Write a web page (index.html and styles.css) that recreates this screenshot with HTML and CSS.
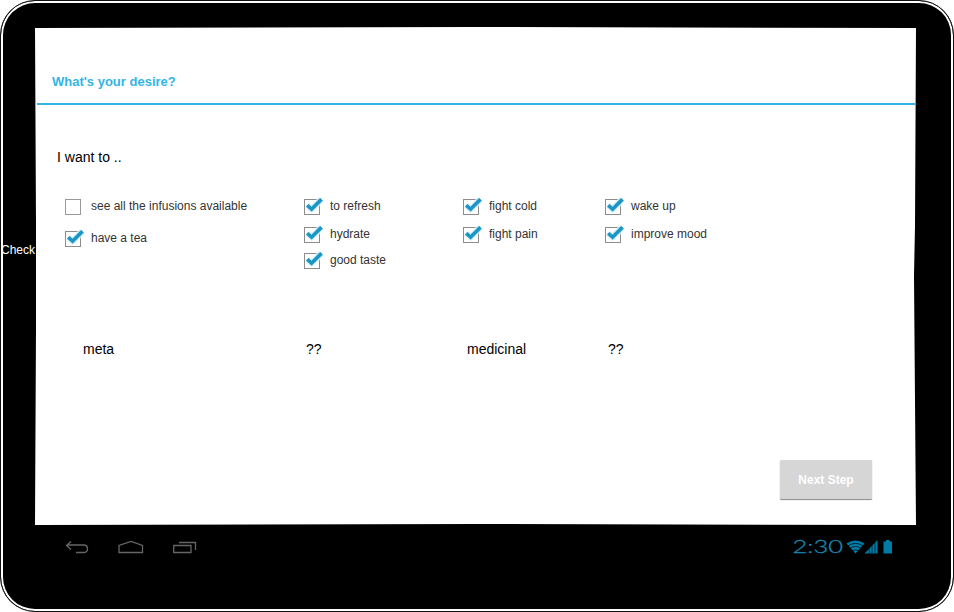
FILE: index.html
```html
<!DOCTYPE html>
<html lang="en">
<head>
<meta charset="utf-8">
<title>What's your desire?</title>
<link rel="stylesheet" href="styles.css">
</head>
<body>
<svg class="defs" width="0" height="0" aria-hidden="true">
  <symbol id="off" viewBox="0 0 22 22"><rect x="1.5" y="4.500" width="15" height="15" fill="#fff" stroke="#999"/></symbol>
  <symbol id="on" viewBox="0 0 22 22">
    <rect x="1.5" y="4.500" width="15" height="15" fill="#fff" stroke="#8c8c8c"/>
    <path d="M4.200 10.300 8.600 14.200 18.500 4.200" fill="none" stroke="#e3f5fb" stroke-opacity=".75" stroke-width="7" stroke-linejoin="round"/>
    <path d="M4.200 10.300 8.600 14.200 18.500 4.200" fill="none" stroke="#7fcdea" stroke-opacity=".5" stroke-width="4.800"/>
    <path d="M4.200 10.300 8.600 14.200 18.500 4.200" fill="none" stroke="#1b96c4" stroke-width="3.500"/>
  </symbol>
</svg>
<div class="device">
  <div class="body">
    <div class="side">Check</div>
    <main class="screen">
      <h1>What's your desire?</h1>
      <p class="intro">I want to ..</p>
      <div class="options">
        <div class="col">
          <label class="gap"><svg><use href="#off"/></svg>see all the infusions available</label>
          <label><svg><use href="#on"/></svg>have a tea</label>
        </div>
        <div class="col">
          <label><svg><use href="#on"/></svg>to refresh</label>
          <label class="tight"><svg><use href="#on"/></svg>hydrate</label>
          <label><svg><use href="#on"/></svg>good taste</label>
        </div>
        <div class="col">
          <label><svg><use href="#on"/></svg>fight cold</label>
          <label><svg><use href="#on"/></svg>fight pain</label>
        </div>
        <div class="col">
          <label><svg><use href="#on"/></svg>wake up</label>
          <label><svg><use href="#on"/></svg>improve mood</label>
        </div>
      </div>
      <div class="groups"><span>meta</span><span>??</span><span>medicinal</span><span>??</span></div>
      <button type="button">Next Step</button>
    </main>
  </div>
  <footer class="navbar">
    <svg class="nav" width="136" height="20" viewBox="0 0 136 20" fill="none" stroke="#666" stroke-width="1.300">
      <path d="M7 2.500 2.500 6.500 7 10.500M2.500 6H19.500Q23.500 6 23.500 9.700T19.500 13.500H12"/>
      <path d="M55 13.500V6.500L67 2.500 78.500 6.500V13.500Z"/>
      <path d="M109.700 6.500H127V13.500H109.700ZM115 3.500H131.500V11"/>
    </svg>
    <svg class="status" width="102" height="20" viewBox="0 0 102 20">
      <text x="0.500" y="14" textLength="50.500" lengthAdjust="spacingAndGlyphs">2:30</text>
      <g fill="#007ba7">
        <path d="M54.500 4.500Q63.500-1.300 72.500 4.500L63.500 14.500Z"/>
        <path d="M56 6.800Q63.500 2 71 6.800M58 9.300Q63.500 5.600 69 9.300M60.500 11.700Q63.500 9.800 66.500 11.700" fill="none" stroke="#000" stroke-width=".7"/>
        <path d="M72.500 14.500 85.500 1V14.500Z"/>
        <path d="M77.200 5V15M80 2V15M83 0V15" stroke="#000" stroke-width=".6"/>
        <path d="M91.500 2.500H94V1H97.500V2.500H100V14.500H91.500Z"/>
      </g>
    </svg>
  </footer>
</div>
</body>
</html>
```
FILE: styles.css
```css
* { box-sizing: border-box; }
body {
  margin: 0;
  width: 954px;
  height: 612px;
  overflow: hidden;
  background: #fff;
  font-family: "Liberation Sans", Arial, sans-serif;
}
.defs { display: block; height: 0; }
.device {
  width: 954px;
  height: 612px;
  padding: 2px;
  border: 1.500px solid #111;
  border-radius: 35px;
  background: #000;
  display: flex;
  flex-direction: column;
  overflow: hidden;
  box-shadow: inset 0 0 0 2px #fff;
}
.body { display: flex; height: 523px; padding-top: 24px; }
.side {
  width: 32px;
  flex: none;
  padding-top: 215px;
  text-indent: -2px;
  white-space: nowrap;
  color: #fff;
  font-size: 12px;
  line-height: 16px;
}
.screen {
  width: 881px;
  height: 498px;
  flex: none;
  background: #fff;
  clip-path: polygon(0 1px, 50% 0, 881px 1px, 880px 40%, 879px 50%, 880px 75%, 881px 498px, 50% 497px, 0 498px, 1px 60%, 1px 40%);
  display: flex;
  flex-direction: column;
}
h1 {
  margin: 0 0 0 2px;
  height: 78px;
  padding: 47px 0 0 15px;
  border-bottom: 2px solid #33b5e5;
  color: #33b5e5;
  font-size: 13px;
  line-height: 16px;
}
.intro { margin: 43px 0 0 22px; font-size: 14px; line-height: 18px; }
.options {
  display: grid;
  grid-template-columns: 239px 159px 142px 200px;
  height: 162px;
  padding: 29px 0 0 29px;
}
.col { display: flex; flex-direction: column; gap: 6px; }
label {
  display: flex;
  align-items: center;
  height: 22px;
  color: #333;
  font-size: 12px;
  line-height: 22px;
  white-space: nowrap;
}
label svg { width: 22px; height: 22px; flex: none; margin-right: 5px; }
.gap { margin-bottom: 4px; }
.tight { margin-bottom: -2px; }
.groups {
  display: grid;
  grid-template-columns: 223px 161px 141px 100px;
  margin: 12px 0 0 48px;
  font-size: 14px;
  line-height: 18px;
}
button {
  align-self: flex-end;
  width: 92px;
  height: 39px;
  margin: 102px 44px 0 0;
  padding: 0;
  border: 0;
  border-radius: 1px;
  background: #d6d6d6;
  box-shadow: 0 1px 1px #888;
  color: #fff;
  font: bold 12px "Liberation Sans", Arial, sans-serif;
}
.navbar {
  display: flex;
  justify-content: space-between;
  padding: 13px 57px 0 61px;
}
.status { overflow: visible; }
.status text {
  fill: #1688b5;
  stroke: #1688b5;
  stroke-width: 0.3px;
  font-family: Lato, Roboto, sans-serif;
  font-size: 17.500px;
  font-weight: 300;
}
```
